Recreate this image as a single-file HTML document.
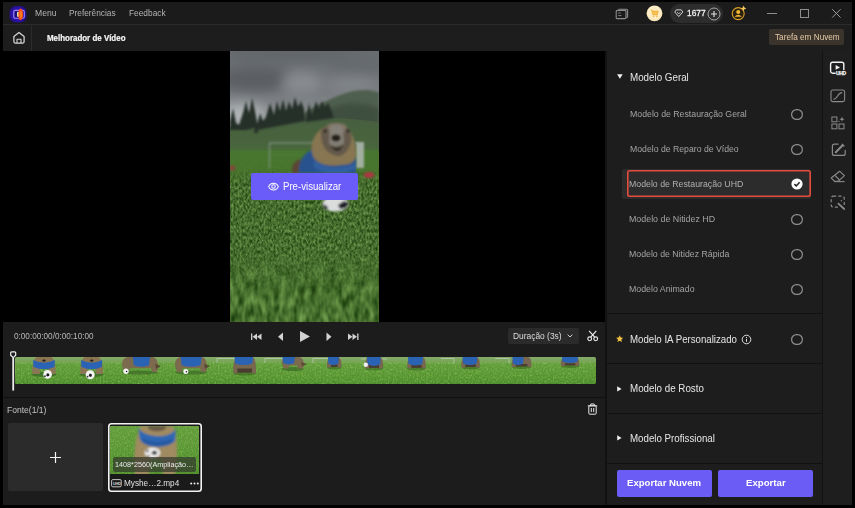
<!DOCTYPE html>
<html lang="pt">
<head>
<meta charset="utf-8">
<title>Melhorador de Vídeo</title>
<style>
*{box-sizing:border-box;margin:0;padding:0}
html,body{width:855px;height:508px;overflow:hidden;background:#000}
body{font-family:"Liberation Sans",Arial,sans-serif;color:#ddd;position:relative;font-size:10px}
.abs{position:absolute}
#app{position:absolute;left:3px;top:2px;width:849px;height:503px;background:#121212;overflow:hidden}
#titlebar{position:absolute;left:0;top:0;width:849px;height:22px;background:#1b1b1b}
#titlebar .m{position:absolute;top:5px;font-size:9.5px;color:#b9b9b9;white-space:nowrap;line-height:12px}
#sep1{position:absolute;left:0;top:22px;width:849px;height:1px;background:#2b2b2b}
#bar2{position:absolute;left:0;top:23px;width:849px;height:26px;background:#1d1d1d}
#bar2 .vs{position:absolute;left:28px;top:0;width:1px;height:26px;background:#2b2b2b}
#bar2 .ttl{position:absolute;left:43px;top:7px;font-size:9px;font-weight:bold;color:#f2f2f2;white-space:nowrap;line-height:12px}
#cloud{position:absolute;left:766px;top:4.2px;width:74.6px;height:16.2px;background:#3a342d;border-radius:2px;color:#e6caa4;font-size:9px;line-height:17px;text-align:center;white-space:nowrap}
#video{position:absolute;left:0;top:49px;width:602px;height:271px;background:#000;overflow:hidden}
#ctrl{position:absolute;left:0;top:320px;width:602px;height:183px;background:#1c1c1c}
#panel{position:absolute;left:604.4px;top:49px;width:214.6px;height:454px;background:#1d1d1d}
#strip{position:absolute;left:819px;top:49px;width:30px;height:454px;background:#1e1e1e;border-left:1px solid #131313}

#panel .hdr{position:absolute;left:25px;font-size:10.5px;color:#e4e4e4;white-space:nowrap;line-height:14px}
#panel .it{position:absolute;left:25px;font-size:9.5px;color:#a8a8a8;white-space:nowrap;line-height:14px}
#panel .sep{position:absolute;left:0;width:214.6px;height:1.4px;background:#111}
.radio{position:absolute;width:11.2px;height:11.2px;box-shadow:inset 0 0 0 1.2px #8e8e8e;border-radius:50%}
.tri-d{position:absolute;width:0;height:0;border-left:2.7px solid transparent;border-right:2.7px solid transparent;border-top:4.4px solid #eee}
.tri-r{position:absolute;width:0;height:0;border-top:2.6px solid transparent;border-bottom:2.6px solid transparent;border-left:4.3px solid #eee}
#selrow{position:absolute;left:15px;top:118px;width:188.8px;height:29.6px;background:#2c2c2c;border-radius:2px}
#selbox{position:absolute;left:19.3px;top:119.1px;width:184.2px;height:26.8px;box-shadow:inset 0 0 0 1.6px #e64c3c;border-radius:2.5px}
.btn{position:absolute;top:419.2px;height:26.7px;background:#6b5cf6;border-radius:2px;color:#fff;font-weight:bold;font-size:10px;line-height:27px;text-align:center;white-space:nowrap}
#ctrl .time{position:absolute;left:10px;top:8px;font-size:9px;color:#b4b4b4;white-space:nowrap;line-height:12px}
#ctrl .hsep{position:absolute;left:0;top:75px;width:605px;height:1px;background:#111}
#dd{position:absolute;left:505px;top:6px;width:71px;height:16px;background:#2b2b2b;border-radius:2px}
#dd span{position:absolute;left:5px;top:2px;font-size:9px;color:#d6d6d6;line-height:12px;white-space:nowrap}
#film{position:absolute;left:11.8px;top:35.3px;width:580.8px;height:26.6px;border-radius:2px;overflow:hidden;background:#4f7d25}
#addbox{position:absolute;left:5px;top:101px;width:95px;height:68px;background:#2b2b2b;border-radius:2px}
#card{position:absolute;left:104.5px;top:101px;width:94.3px;height:69px;box-shadow:inset 0 0 0 1.6px #f2f2f2;border-radius:3.5px;background:#1a1a1a}
#thumb{position:absolute;left:2.9px;top:2.9px;width:88.8px;height:48.6px;background:#5a8a2c;overflow:hidden}
#thumb .lbl{position:absolute;left:2.6px;top:31px;width:83.4px;height:15px;background:rgba(50,56,44,.72);border-radius:2px;color:#e8e8e8;font-size:8px;line-height:13px;padding-left:3px;white-space:nowrap}
.fname{position:absolute;left:17px;top:54px;font-size:9px;color:#ddd;line-height:11px;white-space:nowrap}
.fonte{position:absolute;left:5px;top:82px;font-size:9px;color:#bdbdbd;line-height:12px;white-space:nowrap}
#pvbtn{position:absolute;left:248px;top:122.4px;width:106.8px;height:26.5px;background:#6a5cf8;border-radius:2px;color:#fff;font-size:10px;line-height:27px;white-space:nowrap}
#pvbtn span{position:absolute;left:33px;top:0}
#txt{position:absolute;left:0;top:0;width:0;height:0}
#txt span{position:absolute;white-space:nowrap;line-height:14px;transform-origin:0 0}
</style>
</head>
<body>
<div id="app">
  <div id="titlebar">
    <svg class="abs" style="left:5.9px;top:2.6px" width="18.4" height="18.4" viewBox="0 0 20 20">
      <defs><radialGradient id="lg" cx="0.5" cy="0.5" r="0.6"><stop offset="0" stop-color="#3a18c8"/><stop offset="0.7" stop-color="#2a12a0"/><stop offset="1" stop-color="#1a0c58"/></radialGradient>
      <filter id="lb"><feGaussianBlur stdDeviation="0.45"/></filter></defs>
      <rect x="0.6" y="1" width="18.4" height="18" rx="6" fill="url(#lg)"/>
      <g filter="url(#lb)">
      <rect x="5.2" y="5.8" width="11.4" height="8.6" rx="1.6" fill="#1c0c78" stroke="#9c84ff" stroke-width="1.3"/>
      <ellipse cx="12.6" cy="10.2" rx="2.7" ry="6.4" fill="#ff4a14"/>
      <ellipse cx="12.9" cy="10.2" rx="1.4" ry="4" fill="#ff7a20"/>
      <rect x="8.8" y="7.4" width="1.5" height="5.4" rx="0.6" fill="#ffe9a0"/>
      </g>
    </svg>
    <!-- task icon -->
    <svg class="abs" style="left:612px;top:5px" width="15" height="14" viewBox="0 0 15 14"><g fill="none" stroke="#8c8c8c" stroke-width="1.1"><path d="M3.4 2.2 H11.4 Q12.6 2.2 12.6 3.4 V9.6 Q12.6 10.8 11.4 10.8 H4"/><rect x="1.2" y="3.4" width="9.8" height="8.2" rx="1.2" fill="#1b1b1b"/><path d="M3.2 6 H5.6 M3.2 8.6 H6.4" stroke-width="0.9"/></g></svg>
    <!-- cart -->
    <svg class="abs" style="left:643px;top:3px" width="17" height="17" viewBox="0 0 17 17"><defs><radialGradient id="cg" cx="0.5" cy="0.45" r="0.55"><stop offset="0" stop-color="#ffe9b0"/><stop offset="0.7" stop-color="#fdeec8"/><stop offset="1" stop-color="#f6dfae"/></radialGradient></defs><circle cx="8.5" cy="8.3" r="7.9" fill="url(#cg)"/><path d="M4.8 5.2 H6 L7 9.6 H11.2 L12 6.4 H6.4" fill="#f7c25a" stroke="#f4b444" stroke-width="1.1" stroke-linejoin="round"/><circle cx="7.6" cy="11.4" r="0.8" fill="#f4b444"/><circle cx="10.8" cy="11.4" r="0.8" fill="#f4b444"/></svg>
    <!-- pill -->
    <div class="abs" style="left:667px;top:2px;width:53px;height:19px;border-radius:10px;background:#2d2d2d"></div>
    <svg class="abs" style="left:671.2px;top:7.2px" width="9.6" height="8.4" viewBox="0 0 11 10"><g fill="none" stroke="#f0f0f0" stroke-width="1" stroke-linejoin="round"><path d="M2.6 1 H8.4 L10.3 3.6 L5.5 9 L0.7 3.6 Z"/><path d="M3.6 3.8 L5.5 5.8 L7.4 3.8" stroke-width="0.9"/></g></svg>
    <svg class="abs" style="left:704px;top:5px" width="14" height="14" viewBox="0 0 14 14"><circle cx="7" cy="7" r="6" fill="none" stroke="#a8a8a8" stroke-width="1"/><path d="M7 4 V10 M4 7 H10" stroke="#e0e0e0" stroke-width="1.1"/></svg>
    <!-- user -->
    <svg class="abs" style="left:727px;top:2px" width="18" height="18" viewBox="0 0 18 18"><circle cx="8.2" cy="9.6" r="6" fill="#2a2010" stroke="#d8a028" stroke-width="1.1"/><circle cx="8.2" cy="8" r="2" fill="#f0b830"/><path d="M4.6 12.8 Q8.2 8.6 11.8 12.8 Z" fill="#f0b830"/><path d="M13.6 1.6 L14.4 3.6 L16.4 4.4 L14.4 5.2 L13.6 7.2 L12.8 5.2 L10.8 4.4 L12.8 3.6 Z" fill="#f4c860"/></svg>
    <!-- window controls -->
    <div class="abs" style="left:764px;top:10.5px;width:9.5px;height:1px;background:#8e8e8e"></div>
    <div class="abs" style="left:796.5px;top:7px;width:9px;height:9px;border:1px solid #8e8e8e"></div>
    <svg class="abs" style="left:828px;top:6px" width="11" height="11" viewBox="0 0 11 11"><path d="M1.2 1.2 L9.6 9.6 M9.6 1.2 L1.2 9.6" stroke="#9a9a9a" stroke-width="1"/></svg>
  </div>
  <div id="sep1"></div>
  <div id="bar2">
    <div class="vs"></div>
    <svg class="abs" style="left:9px;top:6px" width="14" height="14" viewBox="0 0 14 14"><g fill="none" stroke="#d6d6d6" stroke-width="1.25" stroke-linejoin="round"><path d="M1.9 5.6 L7 1.4 L12.1 5.6 V10.8 Q12.1 12 10.9 12 H3.1 Q1.9 12 1.9 10.8 Z"/><path d="M5 12 V8.2 H9 V12" stroke-width="1.1"/></g></svg>
    <div id="cloud"></div>
  </div>
  <div id="video">
    <svg class="abs" style="left:226.5px;top:-0.5px" width="149.5" height="272" viewBox="0 0 149.5 272">
      <defs>
        <linearGradient id="sky" x1="0" y1="0" x2="0" y2="1"><stop offset="0" stop-color="#6c7074"/><stop offset="0.5" stop-color="#7a7e82"/><stop offset="1" stop-color="#a0a4a6"/></linearGradient>
        <linearGradient id="mead" x1="0" y1="0" x2="0" y2="1"><stop offset="0" stop-color="#4a6242"/><stop offset="0.6" stop-color="#4c6c40"/><stop offset="1" stop-color="#4e7a36"/></linearGradient>
        <linearGradient id="gfade" x1="0" y1="0" x2="0" y2="1"><stop offset="0" stop-color="#fff" stop-opacity="0"/><stop offset="0.55" stop-color="#fff" stop-opacity="0"/><stop offset="0.85" stop-color="#fff" stop-opacity="1"/><stop offset="1" stop-color="#fff" stop-opacity="1"/></linearGradient>
        <linearGradient id="gtop" x1="0" y1="0" x2="0" y2="1"><stop offset="0" stop-color="#4d7c31" stop-opacity="1"/><stop offset="0.55" stop-color="#4b7a2f" stop-opacity="0.92"/><stop offset="1" stop-color="#48762c" stop-opacity="0"/></linearGradient>
        <mask id="gm"><rect x="0" y="106" width="149.5" height="166" fill="url(#gfade)"/></mask>
        <filter id="b1" x="-20%" y="-20%" width="140%" height="140%"><feGaussianBlur stdDeviation="1"/></filter>
        <filter id="b2" x="-20%" y="-20%" width="140%" height="140%"><feGaussianBlur stdDeviation="2.5"/></filter>
        <filter id="b5" x="-30%" y="-30%" width="160%" height="160%"><feGaussianBlur stdDeviation="6"/></filter>
        <filter id="gr" x="0" y="0" width="100%" height="100%" color-interpolation-filters="sRGB"><feTurbulence type="fractalNoise" baseFrequency="0.5 0.28" numOctaves="3" seed="11"/><feColorMatrix type="matrix" values="0.5 0 0 0 0.04  0.55 0 0 0 0.17  0.4 0 0 0 -0.01  0 0 0 0 1"/></filter>
        <filter id="gr2" x="0" y="0" width="100%" height="100%" color-interpolation-filters="sRGB"><feTurbulence type="fractalNoise" baseFrequency="0.16 0.07" numOctaves="2" seed="5"/><feColorMatrix type="matrix" values="0.55 0 0 0 0.02  0.62 0 0 0 0.15  0.42 0 0 0 -0.02  0 0 0 0 1"/></filter>
      </defs>
      <rect width="149.5" height="80" fill="url(#sky)"/>
      <g filter="url(#b5)">
        <ellipse cx="26" cy="28" rx="38" ry="12" fill="#5e6266"/>
        <ellipse cx="128" cy="14" rx="30" ry="8" fill="#6a6e72"/>
        <ellipse cx="60" cy="3" rx="60" ry="6" fill="#666a6e"/>
        <ellipse cx="72" cy="32" rx="20" ry="11" fill="#8e9296"/>
        <ellipse cx="122" cy="34" rx="26" ry="9" fill="#868a8e"/>
        <ellipse cx="12" cy="64" rx="24" ry="11" fill="#b8bcbe"/>
      </g>
      <!-- hill -->
      <path d="M70 64 C95 50 115 39 135 39 C142 39 146 41 149.5 42 V80 H60 Z" fill="#526352" filter="url(#b1)"/>
      <path d="M100 58 C115 50 135 50 149.5 58 V76 H100 Z" fill="#435243" filter="url(#b2)"/>
      <!-- meadow -->
      <path d="M0 76 C30 74 60 70 90 67 C110 66 130 69 149.5 71 V125 H0 Z" fill="url(#mead)"/>
      <!-- trees -->
      <g fill="#27322b" filter="url(#b1)">
        <path d="M0 79 L0 70 L3 57 L6 72 L9 74 L13 62 L16 50 L19 62 L22 47 L25 60 L28 76 L16 79 Z"/>
        <path d="M27 74 L30 62 L33 70 L36 66 L40 52 L44 64 L47 50 L50 60 L53 48 L56 60 L59 50 L62 58 L65 46 L68 56 L71 50 L74 58 L75 70 L27 79 Z"/>
        <path d="M76 67 L79 52 L82 64 L86 50 L89 58 L92 50 L95 56 L98 52 L101 58 L104 67 L76 71 Z"/>
        <path d="M24 82 L26 71 L28 82 Z"/>
      </g>
      <!-- grass -->
      <rect x="0" y="104" width="149.5" height="168" fill="#44702a"/>
      <rect x="0" y="104" width="149.5" height="168" filter="url(#gr)"/>
      <rect x="0" y="104" width="149.5" height="168" filter="url(#gr2)" mask="url(#gm)"/>
      <rect x="0" y="100" width="149.5" height="34" fill="url(#gtop)"/>
      <rect x="0" y="99" width="149.5" height="9" fill="#4c7a32" filter="url(#b2)"/>
      <!-- goal -->
      <g fill="none" stroke="#8a9a8c" stroke-width="1.4" opacity="0.8" filter="url(#b1)">
        <path d="M39.5 117 V92 H128"/>
        <path d="M39.5 104 H128" stroke-width="0.6" opacity="0.5"/>
      </g>
      <rect x="126" y="91" width="8" height="26" fill="#b4beb4" opacity="0.9" filter="url(#b1)"/>
      <!-- cones -->
      <ellipse cx="139" cy="124" rx="5.5" ry="3" fill="#b03a44" filter="url(#b1)"/>
      <ellipse cx="2" cy="117" rx="3.5" ry="2.5" fill="#8a4a3c" filter="url(#b1)"/>
      <!-- marmot -->
      <g filter="url(#b1)">
        <path d="M62 122 C61 114 65 110 70 108 L76 122 Z" fill="#5e4a38"/>
        <path d="M69 122 C68 108 76 98 92 96 L126 100 L126 122 Z" fill="#2b5794"/>
        <path d="M82 102 C80 88 88 74 106 73 C120 73 125 86 126 100 C127 110 122 114 112 114 C100 116 84 114 82 102 Z" fill="#8e7a54"/>
        <path d="M91 80 C94 72 118 72 121 82 C123 92 118 102 110 105 C100 105 90 98 91 80 Z" fill="#675d50"/>
        <path d="M97 74 C102 71 112 71 117 75 L114 82 H100 Z" fill="#847866"/>
        <path d="M100 76 C103 73 110 73 113 76 L114 92 C110 96 102 96 99 92 Z" fill="#8a857c"/><ellipse cx="106" cy="87" rx="4.6" ry="3.4" fill="#26221e"/>
        <circle cx="95" cy="80" r="1.5" fill="#1a1816"/><circle cx="118" cy="80" r="1.5" fill="#1a1816"/>
        <path d="M100 95 Q106 99 113 95 Q108 105 100 95 Z" fill="#2e2824"/>
        <path d="M84 110 C96 118 116 118 126 112 L126 118 C112 124 94 124 84 116 Z" fill="#3564a6"/>
      </g>
      <!-- ball -->
      <g filter="url(#b1)">
        <ellipse cx="105.5" cy="153" rx="13" ry="7.5" fill="#e4e6e6"/>
        <path d="M108 154 l6 -4 l5 2 l-3 5 l-6 1 Z" fill="#20242a"/>
        <path d="M94 153 l4 3 l-1 3 l-4 -3 Z" fill="#30343a"/>
      </g>
      <rect width="149.5" height="272" fill="#000" opacity="0.04"/>
    </svg>
    <div id="pvbtn"><svg class="abs" style="left:16.5px;top:9px" width="11" height="9.2" viewBox="0 0 12 10"><path d="M0.7 5 C2.6 0.2 9.4 0.2 11.3 5 C9.4 9.8 2.6 9.8 0.7 5 Z" fill="none" stroke="#fff" stroke-width="1.1"/><circle cx="6" cy="5" r="1.9" fill="none" stroke="#fff" stroke-width="1.1"/></svg></div>
  </div>
  <div id="ctrl">
    <svg class="abs" style="left:245px;top:8px" width="120" height="14" viewBox="0 0 120 14">
      <g fill="#d2d2d2">
        <rect x="3" y="3.5" width="1.3" height="6.5"/><path d="M9 3.5 L4.5 6.75 L9 10 Z"/><path d="M13.5 3.5 L9 6.75 L13.5 10 Z"/>
        <path d="M35 2.5 L30 6.75 L35 11 Z"/>
        <path d="M52 1 L62 6.5 L52 12 Z"/>
        <path d="M78.5 2.5 L83.5 6.75 L78.5 11 Z"/>
        <path d="M100 3.5 L104.5 6.75 L100 10 Z"/><path d="M104.5 3.5 L109 6.75 L104.5 10 Z"/><rect x="109.2" y="3.5" width="1.3" height="6.5"/>
      </g>
    </svg>
    <div id="dd">
      <svg class="abs" style="left:59.3px;top:6px" width="6" height="4" viewBox="0 0 6 4"><path d="M0.6 0.6 L3 3 L5.4 0.6" fill="none" stroke="#d0d0d0" stroke-width="1"/></svg>
    </div>
    <svg class="abs" style="left:584px;top:8px" width="12" height="12" viewBox="0 0 12 12"><g fill="none" stroke="#ececec" stroke-width="1.15"><circle cx="2.7" cy="8.8" r="1.9"/><circle cx="8.7" cy="8.8" r="1.9"/><path d="M3.7 7.2 L9.3 0.8 M7.7 7.2 L2.1 0.8"/></g></svg>
    <div id="film"><svg width="581" height="27" viewBox="0 0 581 27">
      <defs>
        <linearGradient id="fg" x1="0" y1="0" x2="0" y2="1"><stop offset="0" stop-color="#86aa6c"/><stop offset="0.16" stop-color="#7aa65a"/><stop offset="0.27" stop-color="#5e9c38"/><stop offset="0.7" stop-color="#559430"/><stop offset="1" stop-color="#4a8a2a"/></linearGradient>
        <filter id="fb" x="-5%" y="-30%" width="110%" height="160%"><feGaussianBlur stdDeviation="0.55"/></filter>
        <filter id="fn" x="0" y="0" width="100%" height="100%"><feTurbulence type="fractalNoise" baseFrequency="0.6 0.5" numOctaves="2" seed="3" result="n"/><feColorMatrix in="n" type="matrix" values="0 0 0 0 0.45  0 0 0 0 0.7  0 0 0 0 0.2  1.2 1.2 0 0 -1.0"/></filter>
      </defs>
      <rect width="581" height="27" fill="url(#fg)"/>
      <rect y="5" width="581" height="22" filter="url(#fn)" opacity="0.5"/>
      <g stroke="#c8d4c0" stroke-width="0.9" fill="none" opacity="0.7">
        <path d="M202 6 V1.5 H232"/><path d="M250 6 V1.5 H284"/><path d="M298 6 V1.5 H326"/><path d="M346 2 H372"/><path d="M426 1.5 H439 V7"/><path d="M480 1.5 H494 V6"/>
      </g>
      <g filter="url(#fb)"><ellipse cx="29.0" cy="17.5" rx="12.5" ry="2.5" fill="#2f5a1c" opacity="0.6"/><path d="M17.5 17 C16.5 8 19.5 0 22.1 0 H35.9 C38.5 0 41.5 8 40.5 17 H33.1 V12 H24.9 V17 Z" fill="#8a7654"/><path d="M18.0 3 Q29.0 8 40.0 3 L39.5 10 Q29.0 14.5 18.5 10 Z" fill="#2c63b4"/><ellipse cx="29.0" cy="2" rx="5.5" ry="3.6" fill="#8a7450"/><ellipse cx="29.0" cy="3.6" rx="1.6" ry="1.2" fill="#2a2420"/><circle cx="32.6" cy="17.4" r="4.3" fill="#f4f4f4"/><path d="M32.1 16.2 l2 0.6 l0.2 2 l-1.8 0.8 l-1.4 -1.4 Z" fill="#1c1c1c"/><circle cx="30.0" cy="19.2" r="0.9" fill="#333"/><ellipse cx="76.7" cy="17.5" rx="12.1" ry="2.5" fill="#2f5a1c" opacity="0.6"/><path d="M65.5 17 C64.5 8 67.5 0 70.0 0 H83.3 C85.8 0 88.8 8 87.8 17 H80.7 V12 H72.6 V17 Z" fill="#8a7654"/><path d="M66.0 3 Q76.7 8 87.3 3 L86.8 10 Q76.7 14.5 66.5 10 Z" fill="#2c63b4"/><ellipse cx="76.7" cy="2" rx="5.4" ry="3.6" fill="#8a7450"/><ellipse cx="76.7" cy="3.6" rx="1.6" ry="1.2" fill="#2a2420"/><circle cx="75.2" cy="17.8" r="4.5" fill="#f4f4f4"/><path d="M74.7 16.6 l2 0.6 l0.2 2 l-1.8 0.8 l-1.4 -1.4 Z" fill="#1c1c1c"/><circle cx="72.6" cy="19.6" r="0.9" fill="#333"/><ellipse cx="125.0" cy="15.5" rx="18.0" ry="2" fill="#2f5a1c" opacity="0.55"/><path d="M107.0 8.2 C107.0 1 111.0 0 114.0 0 H138.0 C143.0 1 144.0 9.0 142.0 15.0 H137.0 L136.0 11.2 H115.0 L113.0 15.0 H109.0 Z" fill="#7c6a50"/><path d="M140.0 6.8 L146.0 9.0 L141.0 12.0 Z" fill="#5a4836"/><path d="M117.8 0 H135.0 L134.0 8.2 Q126.4 11.2 118.8 8.2 Z" fill="#2c63b4"/><circle cx="111.0" cy="14.3" r="2.7" fill="#f4f4f4"/><circle cx="111.6" cy="14.5" r="0.8" fill="#222"/><ellipse cx="176.0" cy="15.5" rx="16.0" ry="2" fill="#2f5a1c" opacity="0.55"/><path d="M160.0 8.2 C160.0 1 164.0 0 167.0 0 H187.0 C192.0 1 193.0 9.0 191.0 15.0 H186.0 L185.0 11.2 H168.0 L166.0 15.0 H162.0 Z" fill="#7c6a50"/><path d="M189.0 6.8 L195.0 9.0 L190.0 12.0 Z" fill="#5a4836"/><path d="M165.7 0 H186.6 L185.6 8.2 Q176.1 11.2 166.7 8.2 Z" fill="#2c63b4"/><circle cx="170.8" cy="14.6" r="2.5" fill="#f4f4f4"/><circle cx="171.4" cy="14.8" r="0.8" fill="#222"/><ellipse cx="229.6" cy="16.8" rx="11.3" ry="1.6" fill="#2f5a1c" opacity="0.5"/><path d="M218.3 16.5 C217.8 5.0 220.3 0 222.3 0 H236.9 C239.9 0 241.4 5.0 240.9 16.5 H236.9 L235.9 13.2 H223.3 L222.3 16.5 Z" fill="#786650"/><path d="M222.3 11.5 H236.9 V15.7 H222.3 Z" fill="#4a3c30"/><path d="M219.5 0 H238.0 L237.5 6.4 Q228.8 9.6 220.0 6.4 Z" fill="#2c63b4"/><ellipse cx="277.9" cy="12.0" rx="11.2" ry="2" fill="#2f5a1c" opacity="0.55"/><path d="M266.7 6.3 C266.7 1 270.7 0 273.7 0 H284.0 C289.0 1 290.0 6.9 288.0 11.5 H283.0 L282.0 8.6 H274.7 L272.7 11.5 H268.7 Z" fill="#7c6a50"/><path d="M286.0 5.2 L292.0 6.9 L287.0 9.2 Z" fill="#5a4836"/><path d="M267.4 0 H280.0 L279.0 6.3 Q273.7 8.6 268.4 6.3 Z" fill="#2c63b4"/><ellipse cx="319.2" cy="10.8" rx="7.2" ry="1.6" fill="#2f5a1c" opacity="0.5"/><path d="M312.0 10.5 C311.5 3.1 314.0 0 316.0 0 H322.4 C325.4 0 326.9 3.1 326.4 10.5 H322.4 L321.4 8.4 H317.0 L316.0 10.5 Z" fill="#786650"/><path d="M316.0 7.3 H322.4 V10.0 H316.0 Z" fill="#4a3c30"/><path d="M312.9 0 H323.9 L323.4 6.4 Q318.4 9.6 313.4 6.4 Z" fill="#2c63b4"/><ellipse cx="359.0" cy="11.8" rx="9.0" ry="1.6" fill="#2f5a1c" opacity="0.5"/><path d="M350.0 11.5 C349.5 3.4 352.0 0 354.0 0 H364.0 C367.0 0 368.5 3.4 368.0 11.5 H364.0 L363.0 9.2 H355.0 L354.0 11.5 Z" fill="#786650"/><path d="M354.0 8.0 H364.0 V10.9 H354.0 Z" fill="#4a3c30"/><path d="M352.0 0 H365.7 L365.2 7.2 Q358.9 10.8 352.5 7.2 Z" fill="#2c63b4"/><circle cx="350.8" cy="7.8" r="2.2" fill="#f0f0f0"/><ellipse cx="401.5" cy="11.8" rx="9.2" ry="1.6" fill="#2f5a1c" opacity="0.5"/><path d="M392.3 11.5 C391.8 3.4 394.3 0 396.3 0 H406.7 C409.7 0 411.2 3.4 410.7 11.5 H406.7 L405.7 9.2 H397.3 L396.3 11.5 Z" fill="#786650"/><path d="M396.3 8.0 H406.7 V10.9 H396.3 Z" fill="#4a3c30"/><path d="M393.0 0 H408.0 L407.5 6.8 Q400.5 10.2 393.5 6.8 Z" fill="#2c63b4"/><ellipse cx="455.6" cy="10.8" rx="9.2" ry="1.6" fill="#2f5a1c" opacity="0.5"/><path d="M446.3 10.5 C445.8 3.1 448.3 0 450.3 0 H460.8 C463.8 0 465.3 3.1 464.8 10.5 H460.8 L459.8 8.4 H451.3 L450.3 10.5 Z" fill="#786650"/><path d="M450.3 7.3 H460.8 V10.0 H450.3 Z" fill="#4a3c30"/><path d="M447.6 0 H462.3 L461.8 6.4 Q455.0 9.6 448.1 6.4 Z" fill="#2c63b4"/><ellipse cx="506.5" cy="10.3" rx="9.8" ry="1.6" fill="#2f5a1c" opacity="0.5"/><path d="M496.7 10.0 C496.2 3.0 498.7 0 500.7 0 H512.4 C515.4 0 516.9 3.0 516.4 10.0 H512.4 L511.4 8.0 H501.7 L500.7 10.0 Z" fill="#786650"/><path d="M500.7 7.0 H512.4 V9.5 H500.7 Z" fill="#4a3c30"/><path d="M497.4 0 H508.5 L508.0 6.4 Q503.0 9.6 497.9 6.4 Z" fill="#2c63b4"/><ellipse cx="555.0" cy="9.3" rx="9.2" ry="1.6" fill="#2f5a1c" opacity="0.5"/><path d="M545.8 9.0 C545.3 2.7 547.8 0 549.8 0 H560.3 C563.3 0 564.8 2.7 564.3 9.0 H560.3 L559.3 7.2 H550.8 L549.8 9.0 Z" fill="#786650"/><path d="M549.8 6.3 H560.3 V8.5 H549.8 Z" fill="#4a3c30"/><path d="M547.0 0 H563.0 L562.5 4.8 Q555.0 7.2 547.5 4.8 Z" fill="#2c63b4"/></g>
    </svg></div>
    <svg class="abs" style="left:6px;top:28px" width="9" height="42" viewBox="0 0 9 42"><path d="M1.7 3 Q1.7 1.9 2.8 1.9 H5.6 Q6.7 1.9 6.7 3 V5.2 L4.2 7.6 L1.7 5.2 Z" fill="#1c1c1c" stroke="#f0f0f0" stroke-width="1.2" stroke-linejoin="round"/><rect x="3.3" y="7.4" width="1.8" height="33.2" fill="#eaeaea"/></svg>
    <div class="hsep"></div>
    <svg class="abs" style="left:584px;top:81px" width="11" height="12" viewBox="0 0 11 12"><g fill="none" stroke="#e6e6e6" stroke-width="1"><path d="M0.8 2.8 H10.2 M3.8 2.8 V1 H7.2 V2.8"/><rect x="1.8" y="2.8" width="7.4" height="8.4" rx="1"/><path d="M4.3 5 V9 M6.7 5 V9"/></g></svg>
    <div id="addbox"><svg class="abs" style="left:42px;top:29px" width="11" height="11" viewBox="0 0 11 11"><path d="M5.5 0 V11 M0 5.5 H11" stroke="#f4f4f4" stroke-width="1.2"/></svg></div>
    <div id="card">
      <div id="thumb"><svg class="abs" style="left:0;top:0" width="89" height="49" viewBox="0 0 89 49">
        <defs><linearGradient id="tg" x1="0" y1="0" x2="0" y2="1"><stop offset="0" stop-color="#629c3a"/><stop offset="0.5" stop-color="#589632"/><stop offset="1" stop-color="#4c8a2a"/></linearGradient>
        <filter id="tb" x="-10%" y="-10%" width="120%" height="120%"><feGaussianBlur stdDeviation="0.8"/></filter>
        <filter id="tn" x="0" y="0" width="100%" height="100%"><feTurbulence type="fractalNoise" baseFrequency="0.7 0.6" numOctaves="2" seed="9"/><feColorMatrix type="matrix" values="0 0 0 0 0.5  0 0 0 0 0.75  0 0 0 0 0.25  1.2 1.2 0 0 -1.05"/></filter></defs>
        <rect width="89" height="49" fill="url(#tg)"/>
        <rect width="89" height="49" filter="url(#tn)" opacity="0.45"/>
        <g filter="url(#tb)">
          <path d="M25 49 C23 30 25 10 31 0 H63 C68 10 68 30 65 49 H53 L52 34 H40 L39 49 Z" fill="#a08a60"/>
          <path d="M38 0 H56 C58 7 36 7 38 0 Z" fill="#6a5a46"/>
          <path d="M28 1 C32 12 62 14 66 2 L65 15 C58 23 36 23 30 14 Z" fill="#2f68b4"/>
          <path d="M33 12 C40 17 56 17 62 12 L62 16 C56 21 40 21 33 16 Z" fill="#2858a0"/>
          <ellipse cx="42.5" cy="26.8" rx="7.8" ry="5.2" fill="#f0f0f0"/>
          <path d="M42 25.5 l3.5 -1 l2 2.4 l-2.4 2.2 l-3.4 -1 Z" fill="#222"/><circle cx="37.5" cy="25" r="1.3" fill="#333"/><path d="M36 30 l3 1 l1 -2 Z" fill="#333"/>
        </g>
      </svg><div class="lbl"></div></div>
      <svg class="abs" style="left:3.2px;top:56.3px" width="11" height="9" viewBox="0 0 11 9"><rect x="0.6" y="0.6" width="9.6" height="7.2" rx="1.2" fill="none" stroke="#d8d8d8" stroke-width="0.9"/><text x="1.9" y="5.7" font-family="Liberation Sans,sans-serif" font-size="3.7" font-weight="bold" fill="#d8d8d8" letter-spacing="-0.15">UHD</text></svg>
      <svg class="abs" style="left:82.6px;top:59.4px" width="9" height="3" viewBox="0 0 9 3"><g fill="#eee"><circle cx="1.2" cy="1.5" r="1"/><circle cx="4.5" cy="1.5" r="1"/><circle cx="7.8" cy="1.5" r="1"/></g></svg>
    </div>
  </div>
  <div id="panel">
    <svg class="abs" style="left:9.4px;top:23.4px" width="6" height="5" viewBox="0 0 6 5"><path d="M0.1 0.2 H5.7 L2.9 4.8 Z" fill="#f0f0f0"/></svg>
    
    <div class="radio" style="left:184.1px;top:57.9px"></div>
    <div class="radio" style="left:184.1px;top:92.9px"></div>
    <div id="selrow"></div><div id="selbox"></div>
    
    <svg class="abs" style="left:183.9px;top:127.3px" width="12" height="12" viewBox="0 0 12 12"><circle cx="6" cy="6" r="5.6" fill="#fff"/><path d="M3.4 6.1 L5.3 7.9 L8.6 4.3" fill="none" stroke="#222" stroke-width="1.5"/></svg>
    <div class="radio" style="left:184.1px;top:162.9px"></div>
    <div class="radio" style="left:184.1px;top:197.9px"></div>
    <div class="radio" style="left:184.1px;top:232.9px"></div>
    <div class="sep" style="top:262px"></div>
    <svg class="abs" style="left:8.4px;top:284.2px" width="7.4" height="7.4" viewBox="0 0 10 10"><path d="M5 0.3 L6.4 3.4 L9.8 3.8 L7.3 6.1 L8 9.5 L5 7.8 L2 9.5 L2.7 6.1 L0.2 3.8 L3.6 3.4 Z" fill="#f0c040"/></svg>
    
    <svg class="abs" style="left:134.1px;top:282.5px" width="11" height="11" viewBox="0 0 11 11"><circle cx="5.5" cy="5.5" r="4.3" fill="none" stroke="#ddd" stroke-width="1"/><rect x="5" y="4.8" width="1" height="3" fill="#ddd"/><rect x="5" y="3" width="1" height="1" fill="#ddd"/></svg>
    <div class="radio" style="left:184.1px;top:282.9px"></div>
    <div class="sep" style="top:312px"></div>
    <svg class="abs" style="left:9.9px;top:334.6px" width="5" height="6" viewBox="0 0 5 6"><path d="M0.2 0.2 V5.6 L4.6 2.9 Z" fill="#f0f0f0"/></svg>
    
    <div class="sep" style="top:362px"></div>
    <svg class="abs" style="left:9.9px;top:384.2px" width="5" height="6" viewBox="0 0 5 6"><path d="M0.2 0.2 V5.6 L4.6 2.9 Z" fill="#f0f0f0"/></svg>
    
    <div class="sep" style="top:412px"></div>
    <div class="btn" style="left:9.2px;width:95.7px"></div>
    <div class="btn" style="left:110.3px;width:95.6px"></div>
  </div>
  <div id="strip">
    <svg class="abs" style="left:6px;top:9px" width="18" height="16" viewBox="0 0 18 16"><rect x="1.6" y="2.2" width="13.2" height="11" rx="2" fill="none" stroke="#f2f2f2" stroke-width="1.4"/><path d="M6.6 5 L11 7.4 L6.6 9.8 Z" fill="#f2f2f2"/><rect x="6.6" y="10.2" width="10" height="4.6" fill="#1e1e1e"/><text x="6.9" y="14.6" font-family="Liberation Sans,sans-serif" font-size="5" font-weight="bold" fill="#f4f4f4" stroke="#f4f4f4" stroke-width="0.25" letter-spacing="-0.25">UHD</text></svg>
    <svg class="abs" style="left:6.6px;top:37.8px" width="16" height="14" viewBox="0 0 16 14"><g fill="none" stroke="#8a8a8a" stroke-width="1.1"><rect x="1" y="1" width="13.6" height="11.6" rx="1.8"/><path d="M3.4 10.2 C8.4 10.2 6.8 3.6 12.2 3.6"/></g></svg>
    <svg class="abs" style="left:8px;top:64.5px" width="15" height="14" viewBox="0 0 15 14"><g fill="none" stroke="#8a8a8a" stroke-width="1"><rect x="0.9" y="1" width="5" height="4.8"/><rect x="0.9" y="8" width="5" height="4.8"/><rect x="8" y="8" width="5" height="4.8"/></g><path d="M11 0.6 L11.7 2.5 L13.6 3.2 L11.7 3.9 L11 5.8 L10.3 3.9 L8.4 3.2 L10.3 2.5 Z" fill="#8a8a8a"/><circle cx="8" cy="5.4" r="0.6" fill="#8a8a8a"/></svg>
    <svg class="abs" style="left:8px;top:91px" width="16" height="15" viewBox="0 0 16 15"><g fill="none" stroke="#8a8a8a" stroke-width="1.2" stroke-linecap="round"><path d="M7 2.2 H3.4 Q1.4 2.2 1.4 4.2 V11.4 Q1.4 13.4 3.4 13.4 H12.2 Q14.2 13.4 14.2 11.4 V8.4"/><path d="M4.8 10.2 L11.6 3.2" stroke-width="2"/><path d="M11.2 2.2 L13 4"/></g></svg>
    <svg class="abs" style="left:7px;top:118.5px" width="16" height="13" viewBox="0 0 16 13"><g fill="none" stroke="#8a8a8a" stroke-width="1.1" stroke-linejoin="round"><path d="M1.2 8 L9.6 1.2 L14.4 5.6 L8.4 11.2 H4.4 Z"/><path d="M4.6 5.2 L9.6 10"/><path d="M4 11.6 H14.6"/></g></svg>
    <svg class="abs" style="left:7px;top:144px" width="17" height="16" viewBox="0 0 17 16"><rect x="1.2" y="1.2" width="13" height="11" rx="2" fill="none" stroke="#8a8a8a" stroke-width="1.2" stroke-dasharray="3 2.2"/><path d="M8.4 8.6 L14.2 14" stroke="#1e1e1e" stroke-width="4"/><path d="M8.4 8.6 L14.2 14" stroke="#8a8a8a" stroke-width="1.8" stroke-linecap="round"/><circle cx="11.4" cy="5.8" r="0.7" fill="#8a8a8a"/></svg>
  </div>
  <div id="txt">
    <span style="left:31.77px;top:3.95px;font-size:8.8px;transform:scaleX(0.9735);color:#b4b4b4">Menu</span>
    <span style="left:66.49px;top:3.95px;font-size:8.8px;transform:scaleX(0.9443);color:#b4b4b4">Preferências</span>
    <span style="left:126.09px;top:3.95px;font-size:8.8px;transform:scaleX(0.9474);color:#b4b4b4">Feedback</span>
    <span style="left:43.84px;top:28.82px;font-size:8.6px;transform:scaleX(0.9234);color:#f6f6f6;-webkit-text-stroke:0.2px #f6f6f6;font-weight:bold">Melhorador de Vídeo</span>
    <span style="left:771.70px;top:28.05px;font-size:8.8px;transform:scaleX(0.9319);color:#e6caa4">Tarefa em Nuvem</span>
    <span style="left:683.54px;top:4.28px;font-size:9px;transform:scaleX(0.9247);color:#f0f0f0;-webkit-text-stroke:0.3px #f0f0f0">1677</span>
    <span style="left:626.70px;top:67.76px;font-size:10.5px;transform:scaleX(0.9328);color:#e6e6e6">Modelo Geral</span>
    <span style="left:626.51px;top:104.81px;font-size:9.5px;transform:scaleX(0.9211);color:#a4a4a4">Modelo de Restauração Geral</span>
    <span style="left:626.51px;top:139.71px;font-size:9.5px;transform:scaleX(0.9146);color:#a4a4a4">Modelo de Reparo de Vídeo</span>
    <span style="left:626.31px;top:174.71px;font-size:9.5px;transform:scaleX(0.9211);color:#b0b0b0">Modelo de Restauração UHD</span>
    <span style="left:626.20px;top:209.71px;font-size:9.5px;transform:scaleX(0.9315);color:#a4a4a4">Modelo de Nitidez HD</span>
    <span style="left:626.21px;top:244.71px;font-size:9.5px;transform:scaleX(0.9219);color:#a4a4a4">Modelo de Nitidez Rápida</span>
    <span style="left:626.21px;top:279.71px;font-size:9.5px;transform:scaleX(0.9262);color:#a4a4a4">Modelo Animado</span>
    <span style="left:626.51px;top:329.56px;font-size:10.5px;transform:scaleX(0.9209);color:#e6e6e6">Modelo IA Personalizado</span>
    <span style="left:626.50px;top:379.36px;font-size:10.5px;transform:scaleX(0.9304);color:#e6e6e6">Modelo de Rosto</span>
    <span style="left:626.51px;top:428.96px;font-size:10.5px;transform:scaleX(0.9263);color:#e6e6e6">Modelo Profissional</span>
    <span style="left:624.01px;top:474.40px;font-size:9.8px;transform:scaleX(0.9779);color:#ffffff;font-weight:bold">Exportar Nuvem</span>
    <span style="left:742.91px;top:474.40px;font-size:9.8px;transform:scaleX(0.9836);color:#ffffff;font-weight:bold">Exportar</span>
    <span style="left:10.56px;top:326.82px;font-size:8.6px;transform:scaleX(0.9514);color:#b8b8b8">0:00:00:00/0:00:10:00</span>
    <span style="left:510.07px;top:326.99px;font-size:8.7px;transform:scaleX(0.9673);color:#dcdcdc">Duração (3s)</span>
    <span style="left:4.27px;top:400.75px;font-size:8.8px;transform:scaleX(0.9707);color:#c4c4c4">Fonte(1/1)</span>
    <span style="left:112.42px;top:455.67px;font-size:7.6px;transform:scaleX(0.9519);color:#ececec">1408*2560(Ampliação…</span>
    <span style="left:120.52px;top:474.22px;font-size:8.6px;transform:scaleX(0.9555);color:#e0e0e0">Myshe…2.mp4</span>
    <span style="left:279.88px;top:177.84px;font-size:10px;transform:scaleX(0.9623);color:#ffffff">Pre-visualizar</span>
  </div>
</div>
</body>
</html>
